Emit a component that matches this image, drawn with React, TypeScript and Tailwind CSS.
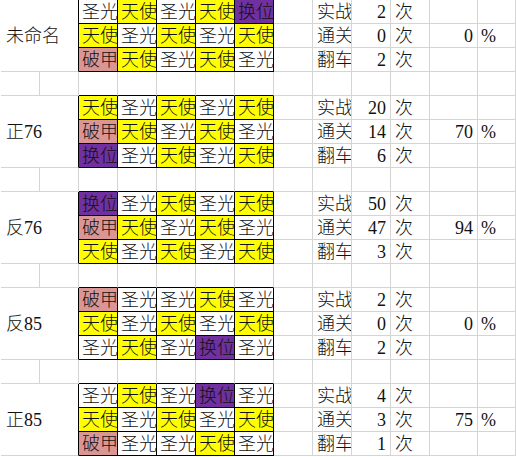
// Spreadsheet view: five line-up groups, each a 5x3 block of coloured role
// cells with win statistics to the right, separated by blank rows.

type Kind = "w" | "y" | "p" | "k";

const NAME: Record<Kind, string> = { w: "圣光", y: "天使", p: "换位", k: "破甲" };
const BG: Record<Kind, string> = {
  w: "bg-white",
  y: "bg-[#ffff00]",
  p: "bg-[#7030a0]",
  k: "bg-[#da9694]",
};

type Group = { name: string; rows: Kind[][]; runs: number; wins: number; fails: number; pct: number };

const GROUPS: Group[] = [
  {
    name: "未命名",
    rows: [
      ["w", "y", "w", "y", "p"],
      ["y", "w", "y", "w", "y"],
      ["k", "y", "w", "y", "w"],
    ],
    runs: 2,
    wins: 0,
    fails: 2,
    pct: 0,
  },
  {
    name: "正76",
    rows: [
      ["y", "w", "y", "w", "y"],
      ["k", "y", "w", "y", "w"],
      ["p", "w", "y", "w", "y"],
    ],
    runs: 20,
    wins: 14,
    fails: 6,
    pct: 70,
  },
  {
    name: "反76",
    rows: [
      ["p", "w", "y", "w", "y"],
      ["k", "y", "w", "y", "w"],
      ["y", "w", "y", "w", "y"],
    ],
    runs: 50,
    wins: 47,
    fails: 3,
    pct: 94,
  },
  {
    name: "反85",
    rows: [
      ["k", "w", "w", "y", "w"],
      ["y", "w", "y", "w", "y"],
      ["w", "y", "w", "p", "w"],
    ],
    runs: 2,
    wins: 0,
    fails: 2,
    pct: 0,
  },
  {
    name: "正85",
    rows: [
      ["w", "y", "w", "p", "w"],
      ["y", "w", "y", "w", "y"],
      ["k", "w", "w", "y", "w"],
    ],
    runs: 4,
    wins: 3,
    fails: 1,
    pct: 75,
  },
];

const GRID = "border-r border-b border-[#d4d4d4]";
const TEXT = "flex items-center overflow-hidden whitespace-nowrap";

function Cell({ children, className = "" }: { children?: React.ReactNode; className?: string }) {
  return <div className={`${GRID} ${TEXT} ${className}`}>{children}</div>;
}

function GroupRows({ g, last }: { g: Group; last: boolean }) {
  const stats: [string, number][] = [
    ["实战", g.runs],
    ["通关", g.wins],
    ["翻车", g.fails],
  ];
  return (
    <>
      <div className={`col-span-2 row-span-3 border-b border-r border-b-[#d4d4d4] border-r-black ${TEXT} pl-[5px]`}>
        {g.name}
      </div>
      {g.rows.map((row, r) => (
        <Row key={r} row={row} label={stats[r][0]} value={stats[r][1]} pct={r === 1 ? g.pct : null} />
      ))}
      {!last &&
        Array.from({ length: 13 }, (_, i) => (
          <div
            key={i}
            className={
              i >= 2 && i <= 6
                ? "border-r border-b border-r-[#d4d4d4] border-b-black"
                : GRID
            }
          />
        ))}
    </>
  );
}

function Row({ row, label, value, pct }: { row: Kind[]; label: string; value: number; pct: number | null }) {
  return (
    <>
      {row.map((k, i) => (
        <div key={i} className={`border-r border-b border-black ${BG[k]} ${TEXT} pl-[3px]`}>
          {NAME[k]}
        </div>
      ))}
      <Cell />
      <Cell className="pl-[4px]">{label}</Cell>
      <Cell className="justify-end pr-[4px]">{value}</Cell>
      <Cell className="pl-[4px]">次</Cell>
      <Cell className="justify-end pr-[4px]">{pct !== null ? pct : ""}</Cell>
      <Cell className="pl-[3px]">{pct !== null ? "%" : ""}</Cell>
    </>
  );
}

export default function App() {
  return (
    <div className="h-[457px] w-[516px] overflow-hidden bg-white">
      <div className="ml-px grid grid-cols-[repeat(11,39px)_48px_38px] auto-rows-[24px] font-['Liberation_Serif','Noto_Sans_CJK_SC',serif] text-[18px] font-light leading-none text-[#111]">
        {GROUPS.map((g, i) => (
          <GroupRows key={g.name} g={g} last={i === GROUPS.length - 1} />
        ))}
      </div>
    </div>
  );
}
